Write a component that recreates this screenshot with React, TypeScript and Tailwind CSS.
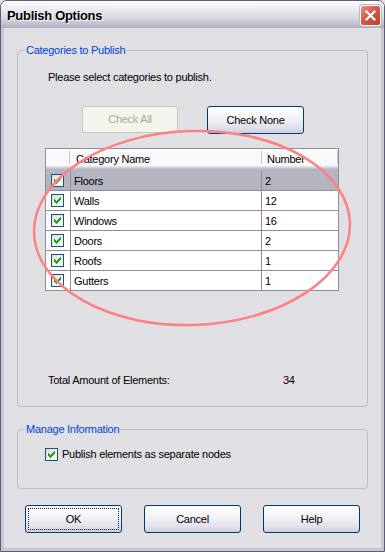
import React from "react";

function CheckMark() {
  const cols = [2, 3, 4, 3, 2, 1, 0];
  return (
    <svg width="7" height="7" viewBox="0 0 7 7" className="block" shapeRendering="crispEdges">
      {cols.map((y, x) => (
        <rect key={x} x={x} y={y} width="1" height="3" fill="#21a121" />
      ))}
    </svg>
  );
}

function Checkbox() {
  return (
    <div className="w-[13px] h-[13px] shrink-0 border border-[#1c5180] bg-[linear-gradient(135deg,#dcdcd7_0%,#f0f0ec_50%,#ffffff_100%)] flex items-center justify-center">
      <CheckMark />
    </div>
  );
}

function XPButton({ children, def }: { children: React.ReactNode; def?: boolean }) {
  return (
    <button
      type="button"
      className="w-[97px] h-[28px] rounded-[3px] border border-[#003c74] bg-[linear-gradient(to_bottom,#ffffff_0%,#f4f4f7_40%,#e0e0ea_80%,#cdcdda_100%)] p-[2px] flex"
    >
      <span
        className={`flex-1 flex items-center justify-center ${def ? "border border-dotted border-[#222]" : ""}`}
      >
        {children}
      </span>
    </button>
  );
}

export default function App() {
  const rows: [string, string][] = [
    ["Floors", "2"],
    ["Walls", "12"],
    ["Windows", "16"],
    ["Doors", "2"],
    ["Roofs", "1"],
    ["Gutters", "1"],
  ];
  return (
    <div className="relative w-[385px] h-[552px] font-['Liberation_Sans',Arial,sans-serif] text-[11px] tracking-[-0.25px] text-black bg-[#e0dfe3]">
      <div className="flex flex-col h-full border border-[#5c5c74] rounded-t-[7px] overflow-hidden">
        {/* Title bar */}
        <div className="h-[27px] shrink-0 flex items-center justify-between pl-[6px] pr-[3px] bg-[linear-gradient(to_bottom,#ffffff_0%,#ebebf1_30%,#d6d6e0_65%,#b0b0c3_100%)]">
          <span className="text-[13px] font-bold tracking-[-0.3px] leading-none pt-[2px] [text-shadow:1px_1px_0_#ffffff]">
            Publish Options
          </span>
          <div className="mt-[2px] w-[21px] h-[21px] rounded-[3px] border border-white shadow-[0_0_0_1px_#b8b8c8] bg-[linear-gradient(135deg,#ec9484_0%,#d65a48_45%,#c13a28_100%)] flex items-center justify-center">
            <svg width="13" height="13" viewBox="0 0 13 13">
              <path d="M2.5 2.5 L10.5 10.5 M10.5 2.5 L2.5 10.5" stroke="#ffffff" strokeWidth="2.2" strokeLinecap="square" />
            </svg>
          </div>
        </div>

        {/* Body */}
        <div className="flex-1 flex flex-col border-x-[3px] border-b-[3px] border-[#c7c7d3]">
          <fieldset className="mt-[16px] mx-[13px] border border-[#bcbcc6] rounded-[4px] pb-[19px]">
            <legend className="ml-[7px] px-[1px] text-[#0046d5] leading-[13px]">Categories to Publish</legend>
            <div className="mt-[14px] ml-[30px] leading-[13px]">Please select categories to publish.</div>

            <div className="mt-[22px] ml-[64px] flex gap-[29px]">
              <button
                type="button"
                className="w-[96px] h-[27px] rounded-[3px] border border-[#c9c7ba] bg-[#f4f3ee] text-[#aca899] flex items-center justify-center"
              >
                Check All
              </button>
              <XPButton>Check None</XPButton>
            </div>

            {/* List view */}
            <div className="mt-[14px] ml-[27px] w-[294px] border-t border-x border-[#8e8e96]">
              <div className="flex h-[20px] bg-[#f9f9fb] shadow-[inset_0_-1px_0_#c3c3cd,inset_0_-2px_0_#d3d3dc,inset_0_-3px_0_#e3e3ea]">
                <div className="w-[24px] flex justify-end">
                  <div className="mt-[2px] w-px h-[13px] bg-[#c7c7d0]" />
                </div>
                <div className="w-[191px] flex items-center pl-[6px]">Category Name</div>
                <div className="mt-[2px] w-px h-[13px] bg-[#c7c7d0]" />
                <div className="w-[75px] flex items-center pl-[5px]">Number</div>
                <div className="mt-[2px] w-px h-[13px] bg-[#c7c7d0]" />
              </div>
              {rows.map(([name, num], i) => (
                <div
                  key={name}
                  className={`flex border-b border-[#8e8e96] ${
                    i === 0 ? "h-[22px] pt-[2px] bg-[#b4b5c0]" : "h-[20px] bg-white"
                  }`}
                >
                  <div className="w-[25px] border-r border-[#8e8e96] flex items-center pl-[5px]">
                    <Checkbox />
                  </div>
                  <div className="w-[191px] border-r border-[#8e8e96] flex items-center pl-[3px] pt-[2px]">{name}</div>
                  <div className="w-[76px] flex items-center pl-[3px] pt-[2px]">{num}</div>
                </div>
              ))}
            </div>

            <div className="mt-[83px] ml-[30px] flex leading-[13px]">
              <span className="w-[235px]">Total Amount of Elements:</span>
              <span>34</span>
            </div>
          </fieldset>

          <fieldset className="mt-[16px] mx-[13px] border border-[#bcbcc6] rounded-[4px] pb-[27px]">
            <legend className="ml-[7px] px-[1px] text-[#0046d5] leading-[13px]">Manage Information</legend>
            <div className="mt-[12px] ml-[27px] flex items-center">
              <Checkbox />
              <span className="ml-[4px] leading-[13px]">Publish elements as separate nodes</span>
            </div>
          </fieldset>

          <div className="mt-[16px] ml-[21px] flex gap-[22px]">
            <XPButton def>OK</XPButton>
            <XPButton>Cancel</XPButton>
            <XPButton>Help</XPButton>
          </div>
        </div>
      </div>

      <svg className="absolute inset-0 pointer-events-none" width="385" height="552">
        <ellipse
          cx="192"
          cy="228"
          rx="158"
          ry="97"
          transform="rotate(-2 192 228)"
          fill="none"
          stroke="#ff8080"
          strokeWidth="2.5"
        />
      </svg>
    </div>
  );
}
